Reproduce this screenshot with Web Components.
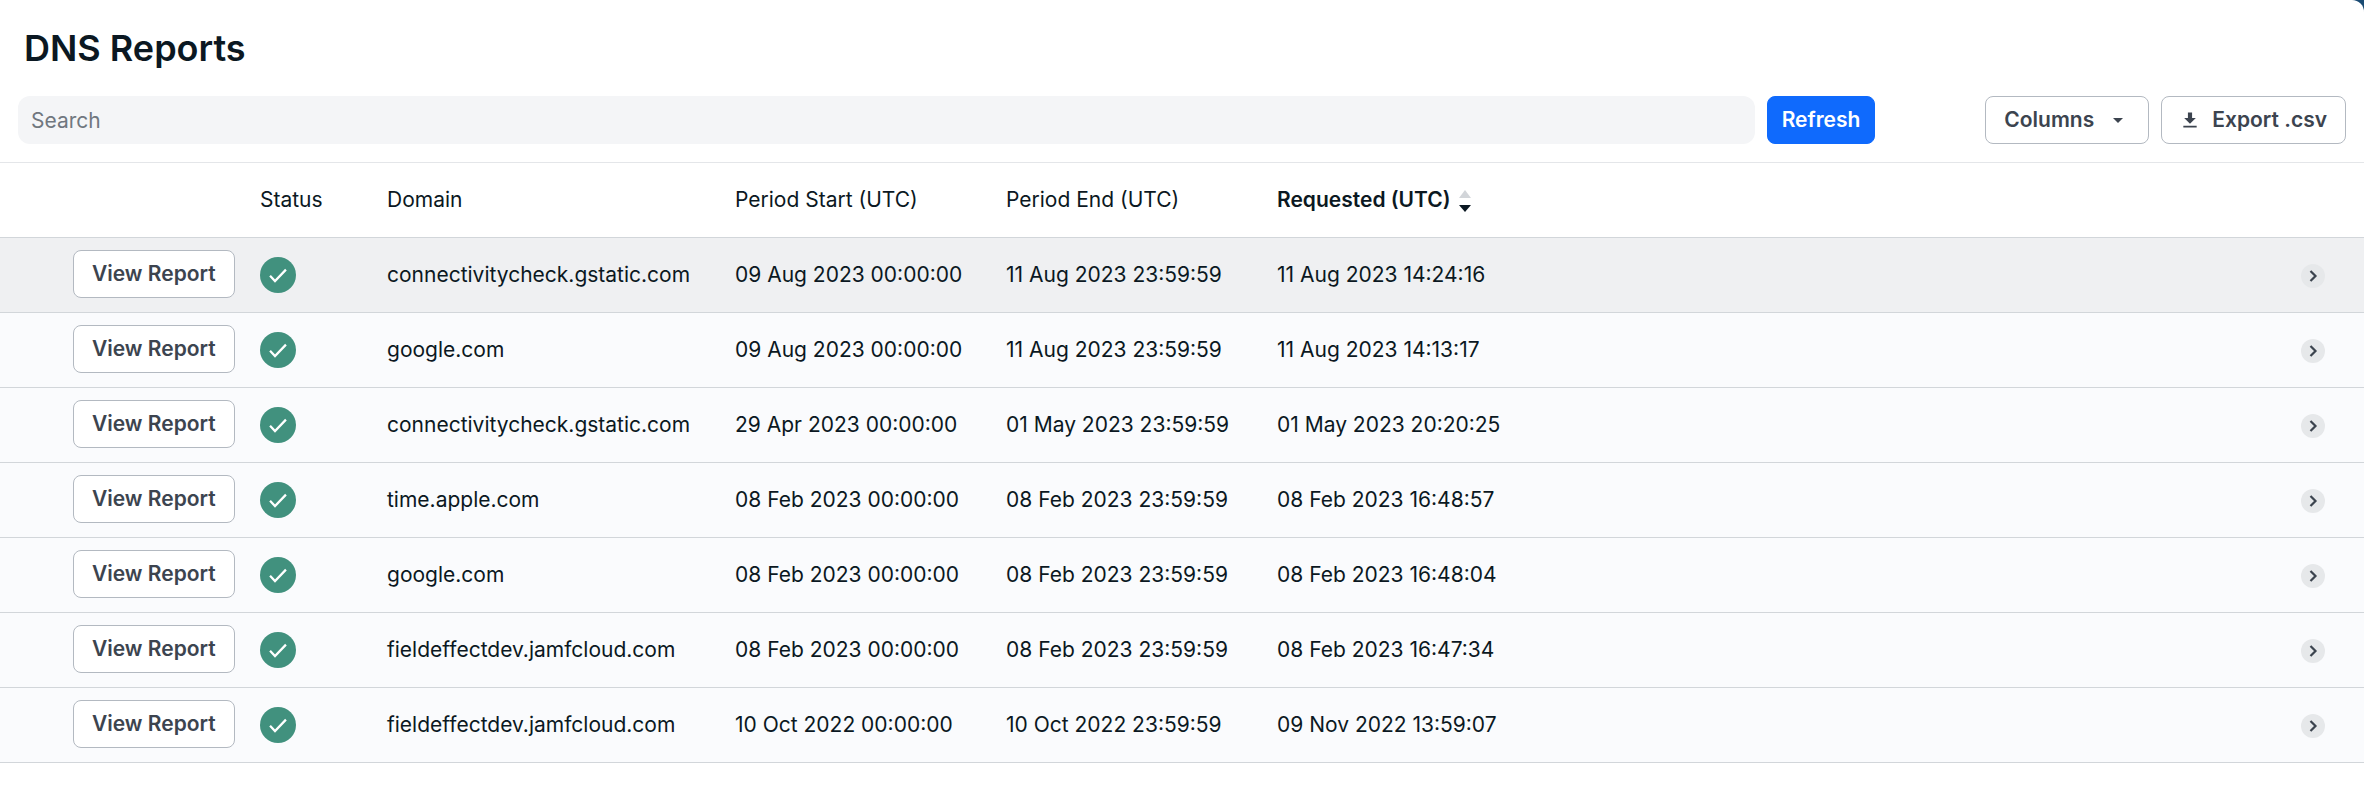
<!DOCTYPE html>
<html lang="en">
<head>
    <meta charset="utf-8">
    <title>DNS Reports</title>
    <style>
        html {
            background: #1a4b73;
        }

        body {
            margin: 0;
            font-family: Inter, "Liberation Sans", sans-serif;
            font-size: 21px;
            line-height: 30px;
            color: #0b1822;
        }
    </style>
</head>
<body>
    <dns-reports-page></dns-reports-page>

    <script>
        class UiButton extends HTMLElement {

            constructor() {
                super();
                this.attachShadow({ mode: 'open' });
                this.shadowRoot.innerHTML = `
                    <style>
                        :host {
                            display: inline-flex;
                            --btn-bg: #fff;
                            --btn-color: #3c444f;
                            --btn-border: #b3b9c1;
                            --btn-padding: 18px;
                        }

                        :host([primary]) {
                            --btn-bg: #0f6afd;
                            --btn-color: #fff;
                            --btn-border: #0f6afd;
                            --btn-padding: 14px;
                        }

                        button {
                            display: flex;
                            align-items: center;
                            gap: 12px;
                            height: 48px;
                            padding: 0 var(--btn-padding);
                            background: var(--btn-bg);
                            color: var(--btn-color);
                            border: 1px solid var(--btn-border);
                            border-radius: 8px;
                            font: inherit;
                            font-weight: 600;
                            white-space: nowrap;
                            cursor: pointer;
                        }
                    </style>
                    <button type="button"><slot name="before"></slot><slot></slot><slot name="after"></slot></button>
                `;
            }
        }

        class UiIcon extends HTMLElement {

            static shapes = {
                caret: '<path d="M7 10h10l-5 5z" fill="currentColor"/>',
                download: '<path d="M9.500 3h5v6.500h4.500l-7 7-7-7h4.500zM4 19h16v2H4z" fill="currentColor"/>',
                check: '<circle cx="12" cy="12" r="12" fill="#41917e"/><path d="M6.700 12.500l3.300 3.500 7.300-7.600" fill="none" stroke="#fff" stroke-width="1.500"/>',
                chevron: '<circle cx="12" cy="12" r="12" fill="#e6e8ea"/><path d="M9.500 7l5 5-5 5" fill="none" stroke="#3c444f" stroke-width="2.200"/>',
                sort: '<path d="M12 2l6 8H6z" fill="#d2d5d9"/><path d="M6 17h12l-6 7z" fill="#0b1822"/>'
            };

            constructor() {
                super();
                this.attachShadow({ mode: 'open' });
            }

            connectedCallback() {
                this.shadowRoot.innerHTML = `
                    <style>
                        :host {
                            display: inline-flex;
                            flex: none;
                            width: 24px;
                            height: 24px;
                        }

                        :host([small]) {
                            width: 20px;
                            height: 20px;
                        }

                        :host([large]) {
                            width: 36px;
                            height: 36px;
                        }

                        svg {
                            width: 100%;
                            height: 100%;
                        }
                    </style>
                    <svg viewBox="0 0 24 24" aria-hidden="true">${UiIcon.shapes[this.getAttribute('name')]}</svg>
                `;
            }
        }

        class ReportsToolbar extends HTMLElement {

            constructor() {
                super();
                this.attachShadow({ mode: 'open' });
                this.shadowRoot.innerHTML = `
                    <style>
                        :host {
                            display: flex;
                            gap: 12px;
                            padding: 0 18px 18px;
                            border-bottom: 1px solid #e4e6e9;
                        }

                        input {
                            flex: 1;
                            min-width: 0;
                            height: 48px;
                            box-sizing: border-box;
                            padding: 0 13px;
                            background: #f4f5f7;
                            color: inherit;
                            border: none;
                            border-radius: 12px;
                            font: inherit;
                        }

                        input::placeholder {
                            color: #70777f;
                        }

                        .actions {
                            display: flex;
                            gap: 12px;
                            margin-left: 98px;
                        }
                    </style>
                    <input type="search" placeholder="Search" aria-label="Search">
                    <ui-button primary>Refresh</ui-button>
                    <div class="actions">
                        <ui-button>Columns<ui-icon slot="after" name="caret"></ui-icon></ui-button>
                        <ui-button><ui-icon slot="before" name="download" small></ui-icon>Export .csv</ui-button>
                    </div>
                `;
            }
        }

        class ReportsTable extends HTMLElement {

            reports = [
                ['connectivitycheck.gstatic.com', '09 Aug 2023 00:00:00', '11 Aug 2023 23:59:59', '11 Aug 2023 14:24:16'],
                ['google.com', '09 Aug 2023 00:00:00', '11 Aug 2023 23:59:59', '11 Aug 2023 14:13:17'],
                ['connectivitycheck.gstatic.com', '29 Apr 2023 00:00:00', '01 May 2023 23:59:59', '01 May 2023 20:20:25'],
                ['time.apple.com', '08 Feb 2023 00:00:00', '08 Feb 2023 23:59:59', '08 Feb 2023 16:48:57'],
                ['google.com', '08 Feb 2023 00:00:00', '08 Feb 2023 23:59:59', '08 Feb 2023 16:48:04'],
                ['fieldeffectdev.jamfcloud.com', '08 Feb 2023 00:00:00', '08 Feb 2023 23:59:59', '08 Feb 2023 16:47:34'],
                ['fieldeffectdev.jamfcloud.com', '10 Oct 2022 00:00:00', '10 Oct 2022 23:59:59', '09 Nov 2022 13:59:07']
            ];

            constructor() {
                super();
                this.attachShadow({ mode: 'open' });
                this.shadowRoot.innerHTML = `
                    <style>
                        :host {
                            display: block;
                        }

                        table {
                            width: 100%;
                            table-layout: fixed;
                            border-spacing: 0;
                        }

                        .col-view { width: 248px; }
                        .col-status { width: 127px; }
                        .col-domain { width: 348px; }
                        .col-date { width: 271px; }

                        th, td {
                            height: 74px;
                            padding: 0 0 0 12px;
                            border-bottom: 1px solid #d2d6da;
                            text-align: left;
                            white-space: nowrap;
                        }

                        th {
                            font-weight: 400;
                        }

                        th[aria-sort] {
                            font-weight: 600;
                        }

                        .sort {
                            display: inline-flex;
                            align-items: center;
                            gap: 2px;
                            padding: 0;
                            background: none;
                            color: inherit;
                            border: none;
                            font: inherit;
                            cursor: pointer;
                        }

                        tbody tr {
                            background: #fafbfd;
                        }

                        tbody tr:first-child {
                            background: #eff0f2;
                        }

                        .view {
                            height: 72px;
                            padding: 0 11px 2px 73px;
                        }

                        .open {
                            padding-right: 39px;
                            text-align: right;
                        }

                        .open button {
                            display: inline-flex;
                            vertical-align: middle;
                            padding: 0;
                            background: none;
                            border: none;
                            border-radius: 50%;
                            color: inherit;
                            cursor: pointer;
                        }

                        ui-button, ui-icon {
                            vertical-align: middle;
                        }
                    </style>
                    <table>
                        <colgroup>
                            <col class="col-view">
                            <col class="col-status">
                            <col class="col-domain">
                            <col class="col-date">
                            <col class="col-date">
                            <col class="col-date">
                            <col>
                        </colgroup>
                        <thead>
                            <tr>
                                <td></td>
                                <th scope="col">Status</th>
                                <th scope="col">Domain</th>
                                <th scope="col">Period Start (UTC)</th>
                                <th scope="col">Period End (UTC)</th>
                                <th scope="col" aria-sort="descending">
                                    <button class="sort" type="button">Requested (UTC)<ui-icon name="sort"></ui-icon></button>
                                </th>
                                <td></td>
                            </tr>
                        </thead>
                        <tbody>${this.reports.map(this.renderRow).join('')}</tbody>
                    </table>
                `;
            }

            renderRow([domain, start, end, requested]) {
                return `
                    <tr>
                        <td class="view"><ui-button>View Report</ui-button></td>
                        <td><ui-icon name="check" large role="img" aria-label="Complete"></ui-icon></td>
                        <td>${domain}</td>
                        <td>${start}</td>
                        <td>${end}</td>
                        <td>${requested}</td>
                        <td class="open"><button type="button" aria-label="Open ${domain}"><ui-icon name="chevron"></ui-icon></button></td>
                    </tr>
                `;
            }
        }

        class DnsReportsPage extends HTMLElement {

            constructor() {
                super();
                this.attachShadow({ mode: 'open' });
                this.shadowRoot.innerHTML = `
                    <style>
                        :host {
                            display: block;
                            min-height: 100vh;
                            background: #fff;
                            border-top-right-radius: 12px;
                        }

                        h1 {
                            margin: 0;
                            padding: 24px;
                            font-size: 36px;
                            line-height: 48px;
                            font-weight: 600;
                        }
                    </style>
                    <h1>DNS Reports</h1>
                    <reports-toolbar></reports-toolbar>
                    <reports-table></reports-table>
                `;
            }
        }

        customElements.define('ui-button', UiButton);
        customElements.define('ui-icon', UiIcon);
        customElements.define('reports-toolbar', ReportsToolbar);
        customElements.define('reports-table', ReportsTable);
        customElements.define('dns-reports-page', DnsReportsPage);
    </script>
</body>
</html>
